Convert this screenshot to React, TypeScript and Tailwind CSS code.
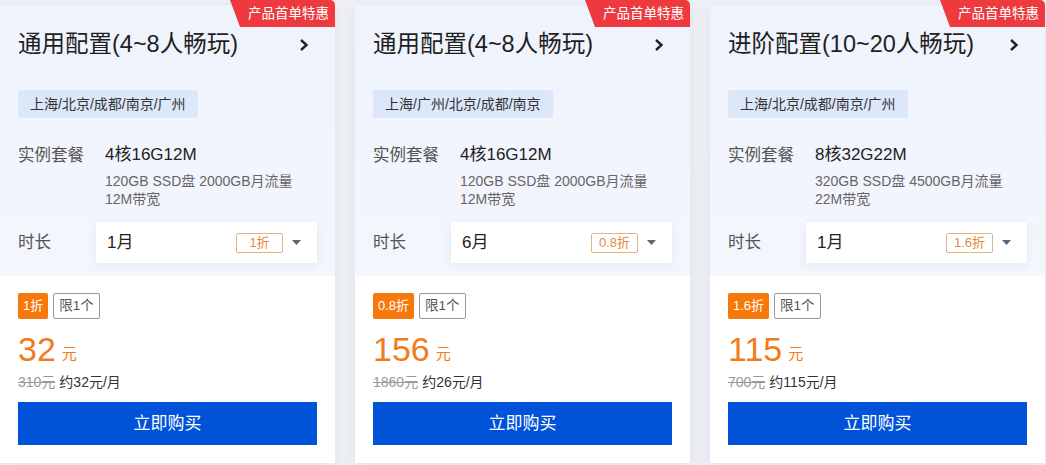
import React from "react";

type Plan = {
  title: string;
  regions: string;
  spec: string;
  disk: string;
  bandwidth: string;
  duration: string;
  discount: string;
  price: string;
  original: string;
  monthly: string;
};

const plans: Plan[] = [
  {
    title: "通用配置(4~8人畅玩)",
    regions: "上海/北京/成都/南京/广州",
    spec: "4核16G12M",
    disk: "120GB SSD盘 2000GB月流量",
    bandwidth: "12M带宽",
    duration: "1月",
    discount: "1折",
    price: "32",
    original: "310元",
    monthly: "约32元/月",
  },
  {
    title: "通用配置(4~8人畅玩)",
    regions: "上海/广州/北京/成都/南京",
    spec: "4核16G12M",
    disk: "120GB SSD盘 2000GB月流量",
    bandwidth: "12M带宽",
    duration: "6月",
    discount: "0.8折",
    price: "156",
    original: "1860元",
    monthly: "约26元/月",
  },
  {
    title: "进阶配置(10~20人畅玩)",
    regions: "上海/北京/成都/南京/广州",
    spec: "8核32G22M",
    disk: "320GB SSD盘 4500GB月流量",
    bandwidth: "22M带宽",
    duration: "1月",
    discount: "1.6折",
    price: "115",
    original: "700元",
    monthly: "约115元/月",
  },
];

function PlanCard({ plan }: { plan: Plan }) {
  return (
    <div className="relative h-[458px] w-[335px] shrink-0 bg-white shadow-[0_2px_14px_rgba(40,60,100,0.08)]">
      <div
        className="absolute right-0 top-[-5px] flex h-[27px] w-[105px] items-center justify-end rounded-tr-[5px] bg-[#ee3a3f] pr-[6px] text-[13.5px] leading-none text-white"
        style={{ clipPath: "polygon(0 0, 100% 0, 100% 100%, 10px 100%)" }}
      >
        产品首单特惠
      </div>

      <div className="bg-gradient-to-b from-[#eff3fc] to-[#f3f6fd] px-[18px] pb-[13px] pt-[24px]">
        <div className="flex h-[32px] items-center justify-between pr-[7px]">
          <span className="text-[23.5px] text-[#1f1f1f]">{plan.title}</span>
          <svg width="12" height="14" viewBox="0 0 12 14" fill="none">
            <path d="M3 2l5.5 5L3 12" stroke="#222" strokeWidth="2.4" strokeLinejoin="miter" />
          </svg>
        </div>

        <div className="mt-[29px] flex">
          <span className="flex h-[28px] items-center rounded-[2px] bg-[#dde7fa] px-[12px] text-[14px] text-[#333]">
            {plan.regions}
          </span>
        </div>

        <div className="mt-[25px] flex">
          <span className="w-[87px] text-[16.5px] leading-[24px] text-[#555]">实例套餐</span>
          <div className="flex flex-col">
            <span className="text-[17px] leading-[24px] text-[#222]">{plan.spec}</span>
            <span className="mt-[5px] text-[14px] leading-[18px] text-[#666]">{plan.disk}</span>
            <span className="text-[14px] leading-[18px] text-[#666]">{plan.bandwidth}</span>
          </div>
        </div>

        <div className="mt-[14px] flex items-center">
          <span className="w-[78px] text-[16.5px] text-[#555]">时长</span>
          <div className="flex h-[41px] flex-1 items-center justify-between bg-white pl-[11px] pr-[16px] shadow-[0_2px_8px_rgba(40,60,100,0.07)]">
            <span className="text-[17px] text-[#222]">{plan.duration}</span>
            <div className="flex items-center gap-[9px]">
              <span className="flex h-[20px] w-[47px] items-center justify-center rounded-[2px] border border-[#dfb47e] text-[13px] text-[#e38b3d]">
                {plan.discount}
              </span>
              <svg width="9" height="5" viewBox="0 0 9 5">
                <path d="M0 0h9L4.5 5z" fill="#5a6576" />
              </svg>
            </div>
          </div>
        </div>
      </div>

      <div className="px-[18px] pt-[17px]">
        <div className="flex gap-[5px]">
          <span className="flex h-[26px] items-center rounded-[2px] bg-[#f7780b] px-[5px] text-[13px] text-white">
            {plan.discount}
          </span>
          <span className="flex h-[26px] items-center rounded-[2px] border border-[#999] px-[5px] text-[13.5px] text-[#555]">
            限1个
          </span>
        </div>

        <div className="mt-[11px] flex h-[38px] items-end">
          <span className="text-[34px] leading-[38px] text-[#f27c1d]">{plan.price}</span>
          <span className="mb-[3px] ml-[6px] text-[15px] text-[#f27c1d]">元</span>
        </div>

        <div className="mt-[4px] flex h-[20px] items-center gap-[4px] text-[14px]">
          <span className="text-[#999] line-through">{plan.original}</span>
          <span className="text-[#333]">{plan.monthly}</span>
        </div>

        <button className="mt-[10px] flex h-[43px] w-full items-center justify-center bg-[#0052d9] text-[17px] text-white">
          立即购买
        </button>
      </div>
    </div>
  );
}

export default function App() {
  return (
    <div
      className="flex h-[465px] w-[1046px] gap-[20px] overflow-hidden bg-[#eef0f5] pt-[5px]"
      style={{ fontFamily: '"Liberation Sans", "Noto Sans CJK SC", sans-serif' }}
    >
      {plans.map((p, i) => (
        <PlanCard key={i} plan={p} />
      ))}
    </div>
  );
}
